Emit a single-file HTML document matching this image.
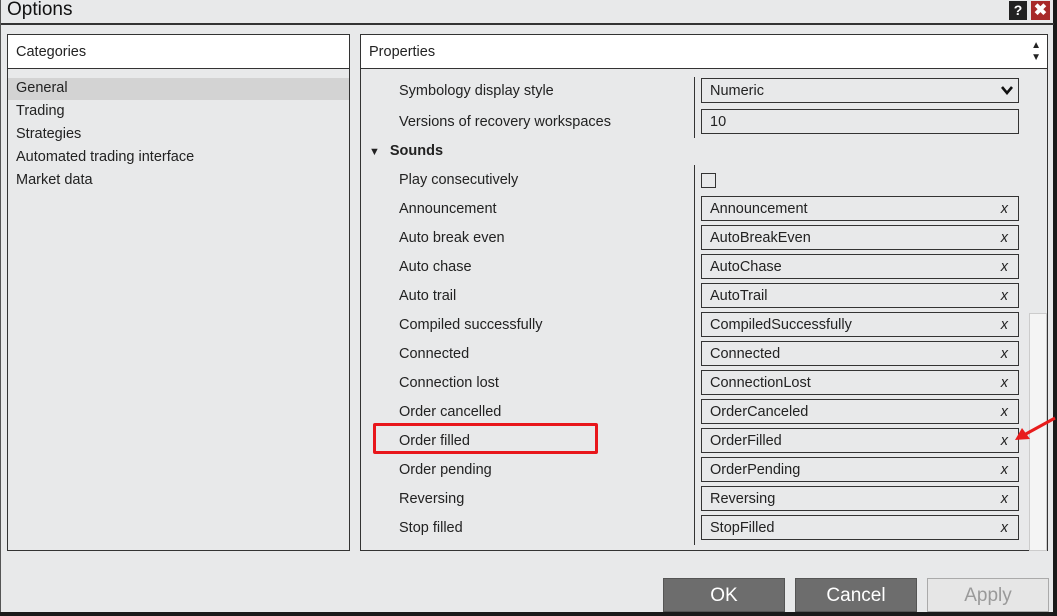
<!DOCTYPE html>
<html><head><style>
*{margin:0;padding:0;box-sizing:border-box}
body{width:1057px;height:616px;background:#1a1a1a;font-family:"Liberation Sans",sans-serif;overflow:hidden;position:relative}
.win{position:absolute;left:0;top:0;width:1053px;height:612px;background:#e8e9ea;border-left:1px solid #555}
.title{position:absolute;left:6px;top:-1px;font-size:19px;color:#111}
.tline{position:absolute;left:0;top:23px;width:1053px;height:2px;background:#333}
.panel{position:absolute;top:34px;height:517px;border:1px solid #333;background:#e8e9ea}
.hdr{height:34px;background:#fff;border-bottom:1px solid #333;font-size:14.5px;padding:9px 8px;color:#222}
.cat{position:absolute;left:8px;font-size:14.5px;color:#222}
.lbl{position:absolute;left:38px;font-size:14.5px;color:#222}
.box{position:absolute;left:340px;width:318px;height:25px;border:1px solid #333;font-size:14.5px;padding:4px 8px 0;color:#222}
.x{position:absolute;right:10px;top:4px;font-style:italic}
.btn{position:absolute;top:578px;width:122px;height:34px;font-size:19px;text-align:center;line-height:34px}
</style></head><body>
<div class="win">
<div class="title">Options</div>
<div style="position:absolute;left:1008px;top:1px;width:18px;height:19px;background:#222;color:#fff;font-weight:bold;font-size:14px;text-align:center;line-height:19px">?</div>
<div style="position:absolute;left:1030px;top:1px;width:19px;height:19px;background:#a82a2a;color:#fff;font-weight:bold;font-size:16px;text-align:center;line-height:19px">✖</div>
<div class="tline"></div>

<div class="panel" style="left:6px;width:343px">
<div class="hdr">Categories</div>
<div style="position:absolute;left:0;top:43px;width:341px;height:22px;background:#d3d3d3"></div>
<div class="cat" style="top:45px">General</div>
<div class="cat" style="top:68px">Trading</div>
<div class="cat" style="top:91px">Strategies</div>
<div class="cat" style="top:114px">Automated trading interface</div>
<div class="cat" style="top:137px">Market data</div>
</div>

<div class="panel" style="left:359px;width:688px">
<div class="hdr">Properties</div>
<div style="position:absolute;right:6px;top:5px;font-size:10px;line-height:12px;color:#222">▲<br>▼</div>
<div style="position:absolute;left:333px;top:42px;width:1px;height:61px;background:#333"></div>
<div style="position:absolute;left:333px;top:130px;width:1px;height:380px;background:#333"></div>
<div style="position:absolute;left:668px;top:278px;width:18px;height:238px;background:#f4f4f4;border:1px solid #ccc"></div>
<div class="lbl" style="top:48px">Symbology display style</div>
<div class="box" style="top:43px;background:#e8e9ea">Numeric<svg style="position:absolute;right:5px;top:7px" width="12" height="9"><path d="M1 1 L6 7 L11 1" stroke="#111" stroke-width="2.6" fill="none"/></svg></div>
<div class="lbl" style="top:79px">Versions of recovery workspaces</div>
<div class="box" style="top:74px">10</div>
<div style="position:absolute;left:8px;top:108px;font-size:14.5px;font-weight:bold;color:#222"><span style="font-size:11px;margin-right:10px">▼</span>Sounds</div>
<div class="lbl" style="top:137px">Play consecutively</div>
<div style="position:absolute;left:340px;top:138px;width:15px;height:15px;border:1px solid #333"></div>

<div class="lbl" style="top:166px">Announcement</div><div class="box" style="top:161px">Announcement<span class="x">x</span></div>
<div class="lbl" style="top:195px">Auto break even</div><div class="box" style="top:190px">AutoBreakEven<span class="x">x</span></div>
<div class="lbl" style="top:224px">Auto chase</div><div class="box" style="top:219px">AutoChase<span class="x">x</span></div>
<div class="lbl" style="top:253px">Auto trail</div><div class="box" style="top:248px">AutoTrail<span class="x">x</span></div>
<div class="lbl" style="top:282px">Compiled successfully</div><div class="box" style="top:277px">CompiledSuccessfully<span class="x">x</span></div>
<div class="lbl" style="top:311px">Connected</div><div class="box" style="top:306px">Connected<span class="x">x</span></div>
<div class="lbl" style="top:340px">Connection lost</div><div class="box" style="top:335px">ConnectionLost<span class="x">x</span></div>
<div class="lbl" style="top:369px">Order cancelled</div><div class="box" style="top:364px">OrderCanceled<span class="x">x</span></div>
<div class="lbl" style="top:398px">Order filled</div><div class="box" style="top:393px">OrderFilled<span class="x">x</span></div>
<div class="lbl" style="top:427px">Order pending</div><div class="box" style="top:422px">OrderPending<span class="x">x</span></div>
<div class="lbl" style="top:456px">Reversing</div><div class="box" style="top:451px">Reversing<span class="x">x</span></div>
<div class="lbl" style="top:485px">Stop filled</div><div class="box" style="top:480px">StopFilled<span class="x">x</span></div>
</div>

<div style="position:absolute;left:372px;top:423px;width:225px;height:31px;border:3px solid #e8161b;border-radius:2px"></div>
<svg style="position:absolute;left:1009px;top:415px" width="47" height="30"><line x1="45" y1="3" x2="14" y2="20" stroke="#e81c1c" stroke-width="3"/><polygon points="5,25 12,13 20,24" fill="#e81c1c"/></svg>

<div class="btn" style="left:662px;background:#6d6d6d;color:#fff;border:1px solid #555">OK</div>
<div class="btn" style="left:794px;background:#6d6d6d;color:#fff;border:1px solid #555">Cancel</div>
<div class="btn" style="left:926px;background:#e6e6e6;color:#9a9a9a;border:1px solid #aaa">Apply</div>
</div>
</body></html>
